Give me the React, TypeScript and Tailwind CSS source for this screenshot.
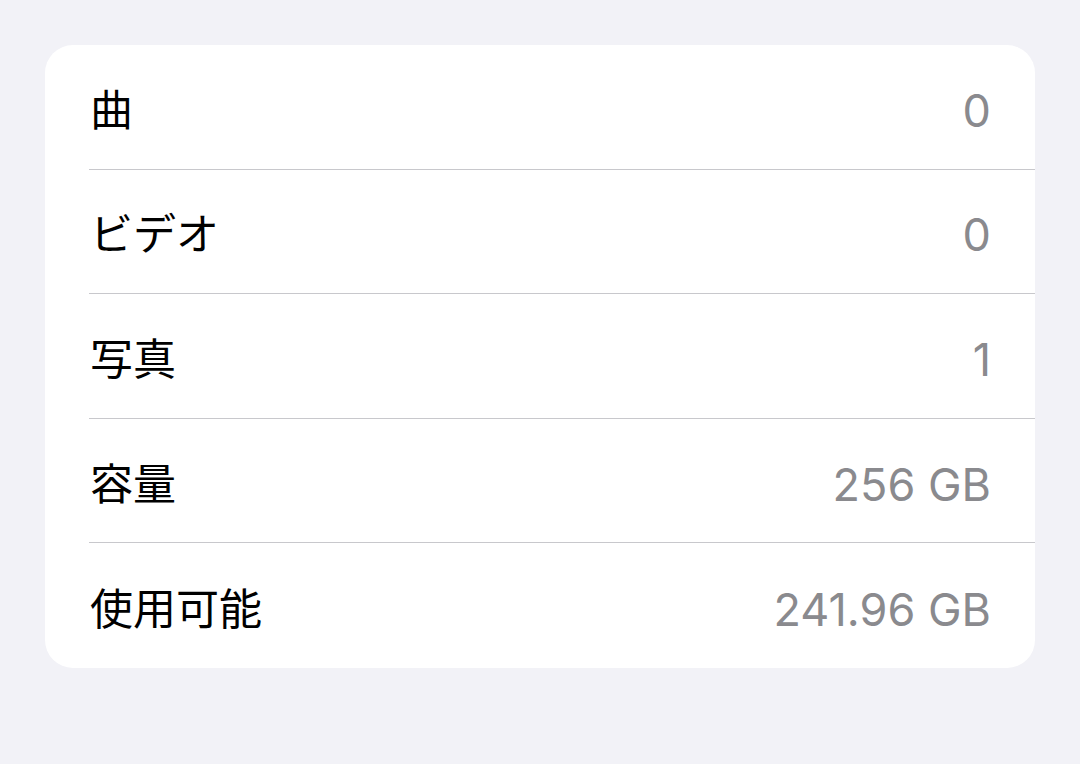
const rows = [
  { label: "曲", value: "0" },
  { label: "ビデオ", value: "0" },
  { label: "写真", value: "1" },
  { label: "容量", value: "256 GB" },
  { label: "使用可能", value: "241.96 GB" },
];

export default function App() {
  return (
    <div
      className="min-h-[764px] w-full bg-[#f2f2f7] px-[45px] pt-[45px]"
      style={{ fontFamily: 'Inter, "Noto Sans CJK JP", sans-serif' }}
    >
      <div className="overflow-hidden rounded-[28px] bg-white">
        {rows.map((row, i) => (
          <div key={row.label} className="pl-[44px]">
            <div
              className={
                "flex h-[124.6px] items-center justify-between pr-[44px] pt-[7px] " +
                (i < rows.length - 1 ? "border-b border-[#c8c8cc]" : "")
              }
            >
              <span className="pl-[1px] text-[43px] leading-none text-black">{row.label}</span>
              <span className="text-[45px] leading-none text-[#8a8a8e]">{row.value}</span>
            </div>
          </div>
        ))}
      </div>
    </div>
  );
}
